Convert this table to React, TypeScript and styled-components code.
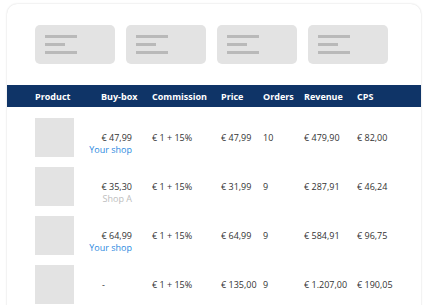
import React from "react";
import styled, { createGlobalStyle } from "styled-components";

const GlobalStyle = createGlobalStyle`
  html, body {
    margin: 0;
    padding: 0;
    background: #fff;
    overflow: hidden;
  }
  body {
    font-family: "Open Sans", "Liberation Sans", sans-serif;
  }
`;

const Page = styled.div`
  padding: 4px 9px 0 7px;
  height: 305px;
  box-sizing: border-box;
`;

const Card = styled.div`
  background: #fff;
  border-radius: 10px;
  box-shadow: 0 0 2px rgba(0, 0, 0, 0.18);
  height: 320px;
  overflow: hidden;
`;

const SkeletonRow = styled.div`
  display: flex;
  gap: 11px;
  padding: 21px 28px;
`;

const SkeletonTile = styled.div`
  width: 80px;
  height: 39px;
  border-radius: 5px;
  background: #e3e3e3;
  box-sizing: border-box;
  padding: 10px 0 0 10px;
  display: flex;
  flex-direction: column;
  gap: 5px;
`;

const SkeletonLine = styled.div<{ $w: number }>`
  width: ${p => p.$w}px;
  height: 3px;
  background: #b9b9b9;
`;

const cols = "66px 51px 69px 42px 41px 53px 1fr";

const HeadRow = styled.div`
  display: grid;
  grid-template-columns: ${cols};
  align-items: center;
  height: 22px;
  padding-left: 28px;
  background: #0f3467;
  color: #fff;
  font-size: 9px;
  font-weight: 700;
`;

const Body = styled.div`
  padding-top: 6px;
`;

const Row = styled.div`
  display: grid;
  grid-template-columns: ${cols};
  align-items: center;
  height: 49px;
  padding-left: 28px;
  font-size: 9px;
  color: #333;
`;

const Thumb = styled.div`
  width: 39px;
  height: 39px;
  background: #e3e3e3;
`;

const BuyBox = styled.div<{ $empty?: boolean }>`
  display: flex;
  flex-direction: column;
  align-items: ${p => (p.$empty ? "flex-start" : "flex-end")};
  padding: 12px 20px 0 ${p => (p.$empty ? "1px" : "0")};
  line-height: 12px;
  white-space: nowrap;
`;

const ShopLabel = styled.span<{ $own: boolean }>`
  color: ${p => (p.$own ? "#2d8ae0" : "#bdbdbd")};
  height: 12px;
`;

const Cell = styled.div`
  white-space: nowrap;
`;

type Item = {
  buy: string;
  shop?: string;
  own?: boolean;
  price: string;
  orders: string;
  revenue: string;
  cps: string;
};

const items: Item[] = [
  { buy: "€ 47,99", shop: "Your shop", own: true, price: "€ 47,99", orders: "10", revenue: "€ 479,90", cps: "€ 82,00" },
  { buy: "€ 35,30", shop: "Shop A", own: false, price: "€ 31,99", orders: "9", revenue: "€ 287,91", cps: "€ 46,24" },
  { buy: "€ 64,99", shop: "Your shop", own: true, price: "€ 64,99", orders: "9", revenue: "€ 584,91", cps: "€ 96,75" },
  { buy: "-", price: "€ 135,00", orders: "9", revenue: "€ 1.207,00", cps: "€ 190,05" },
];

export default function App() {
  return (
    <>
      <GlobalStyle />
      <Page>
        <Card>
          <SkeletonRow>
            {[0, 1, 2, 3].map(i => (
              <SkeletonTile key={i}>
                <SkeletonLine $w={32} />
                <SkeletonLine $w={20} />
                <SkeletonLine $w={32} />
              </SkeletonTile>
            ))}
          </SkeletonRow>
          <HeadRow>
            <Cell>Product</Cell>
            <Cell>Buy-box</Cell>
            <Cell>Commission</Cell>
            <Cell>Price</Cell>
            <Cell>Orders</Cell>
            <Cell>Revenue</Cell>
            <Cell>CPS</Cell>
          </HeadRow>
          <Body>
            {items.map((it, i) => (
              <Row key={i}>
                <Thumb />
                <BuyBox $empty={!it.shop}>
                  <span>{it.buy}</span>
                  <ShopLabel $own={!!it.own}>{it.shop}</ShopLabel>
                </BuyBox>
                <Cell>€ 1 + 15%</Cell>
                <Cell>{it.price}</Cell>
                <Cell>{it.orders}</Cell>
                <Cell>{it.revenue}</Cell>
                <Cell>{it.cps}</Cell>
              </Row>
            ))}
          </Body>
        </Card>
      </Page>
    </>
  );
}
